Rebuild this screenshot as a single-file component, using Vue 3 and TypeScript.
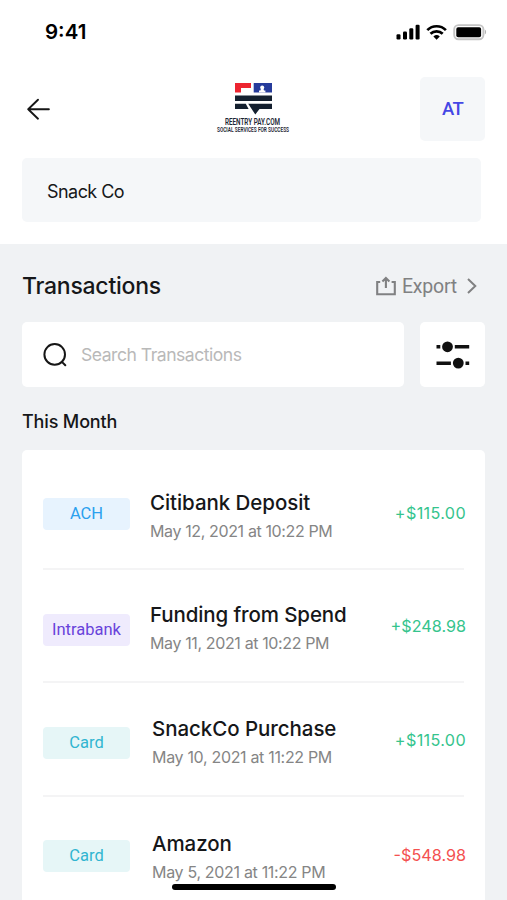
<script setup lang="ts">
interface Transaction {
  kind: string
  tone: 'ach' | 'intrabank' | 'card'
  title: string
  date: string
  amount: string
}

const transactions: Transaction[] = [
  { kind: 'ACH', tone: 'ach', title: 'Citibank Deposit', date: 'May 12, 2021 at 10:22 PM', amount: '+$115.00' },
  { kind: 'Intrabank', tone: 'intrabank', title: 'Funding from Spend', date: 'May 11, 2021 at 10:22 PM', amount: '+$248.98' },
  { kind: 'Card', tone: 'card', title: 'SnackCo Purchase', date: 'May 10, 2021 at 11:22 PM', amount: '+$115.00' },
  { kind: 'Card', tone: 'card', title: 'Amazon', date: 'May 5, 2021 at 11:22 PM', amount: '-$548.98' },
]
</script>

<template>
  <div class="screen">
    <header class="top">
      <div class="status">
        <span class="clock">9:41</span>
        <svg class="status-icons" width="92" height="20" viewBox="0 0 92 20">
          <g fill="#000">
            <rect x="1.5" y="12.3" width="4" height="5.2" rx="1.2" />
            <rect x="8" y="9.6" width="4" height="7.9" rx="1.2" />
            <rect x="14.3" y="6.3" width="4" height="11.2" rx="1.2" />
            <rect x="20.6" y="2.8" width="4" height="14.7" rx="1.2" />
            <path d="M41.6 17.7 38.4 14.4a4.8 4.8 0 0 1 6.4 0Z" />
          </g>
          <g fill="none" stroke="#000" stroke-width="2.7">
            <path d="M32.3 8.1a13.2 13.2 0 0 1 18.6 0" />
            <path d="M35.5 11.8a8.7 8.7 0 0 1 12.2 0" />
          </g>
          <rect x="59.2" y="3.1" width="29.2" height="14.2" rx="4.2" fill="#fff" stroke="#c4c4c4" stroke-width="1.9" />
          <rect x="61.3" y="5.3" width="24.8" height="9.9" rx="1.8" fill="#000" />
          <path d="M89.8 7.6a3 3 0 0 1 0 5Z" fill="#b4b4b4" />
        </svg>
      </div>
      <div class="nav">
        <svg class="back" width="24" height="24" viewBox="0 0 24 24" fill="none" stroke="#161616" stroke-width="1.9" stroke-linecap="round" stroke-linejoin="round">
          <path d="M12 2.7 2.2 12.2 12 21.7M2.2 12.2H22.9" />
        </svg>
        <div class="brand">
          <svg width="38" height="32" viewBox="0 0 38 32">
            <path d="M0 0H16V5H6V9.5H0Z" fill="#ed2530" />
            <path d="M18.7 0H37V9.5H18.7Z" fill="#263b9b" />
            <circle cx="27.2" cy="4.4" r="2" fill="#fff" />
            <path d="M26.2 5H28.2L29 7.4H30.4V9.5H24V7.4H25.4Z" fill="#fff" />
            <path d="M0 12.5H37V18H0ZM0 20.7H10.8L13.6 26H0ZM13.2 20.7H37V26H24.5L20.3 31.6Z" fill="#14202f" />
          </svg>
          <svg class="brand-text" width="78" height="20" viewBox="0 0 78 20" fill="#1d2634">
            <text x="10" y="8.7" textLength="55" lengthAdjust="spacingAndGlyphs" class="brand-name">REENTRY PAY.COM</text>
            <text x="2" y="15.6" textLength="72" lengthAdjust="spacingAndGlyphs" class="brand-tag">SOCIAL SERVICES FOR SUCCESS</text>
          </svg>
        </div>
        <div class="avatar">AT</div>
      </div>
      <div class="account">Snack Co</div>
    </header>

    <main class="content">
      <div class="heading">
        <h1>Transactions</h1>
        <div class="export">
          <svg width="20" height="20" viewBox="0 0 20 20" fill="none" stroke="#808182" stroke-width="2.1">
            <path d="M4.2 6H1.2V18.3H18.8V6H15.6M9.9 12V2.2M6.4 5.5 9.9 2 13.4 5.5" />
          </svg>
          <span>Export</span>
          <svg width="10" height="16" viewBox="0 0 10 16" fill="none" stroke="#808182" stroke-width="2">
            <path d="M1 1 8.3 8 1 15" />
          </svg>
        </div>
      </div>
      <div class="tools">
        <div class="search">
          <svg width="24" height="24" viewBox="0 0 24 24" fill="none" stroke="#161616" stroke-width="2" stroke-linecap="round">
            <circle cx="11.7" cy="11.4" r="10.3" />
            <path d="M18.9 18.9 22.3 22.3" />
          </svg>
          <span>Search Transactions</span>
        </div>
        <div class="filter">
          <svg width="34" height="28" viewBox="0 0 34 28" fill="#111">
            <path d="M.5 4.1H4.3V7.5H.5ZM18.8 4.1H33.2V7.5H18.8ZM.5 20.5H14.9V23.9H.5ZM29.5 20.5H33.2V23.9H29.5Z" />
            <circle cx="11.5" cy="5.8" r="5.4" />
            <circle cx="22.3" cy="22.1" r="5.4" />
          </svg>
        </div>
      </div>
      <h2>This Month</h2>
      <ul class="list">
        <li v-for="item in transactions" :key="item.title" class="row">
          <span class="badge" :class="item.tone">{{ item.kind }}</span>
          <div class="details">
            <div class="title">{{ item.title }}</div>
            <div class="date">{{ item.date }}</div>
          </div>
          <span class="amount" :class="{ debit: item.amount.startsWith('-') }">{{ item.amount }}</span>
        </li>
      </ul>
    </main>
    <div class="home-bar"></div>
  </div>
</template>

<style>
body {
  margin: 0;
  overflow: hidden;
}
</style>

<style scoped>
.screen {
  position: relative;
  width: 507px;
  height: 900px;
  overflow: hidden;
  background: #f0f2f4;
  color: #161719;
  font-family: Inter, "Liberation Sans", sans-serif;
}
.top {
  box-sizing: border-box;
  height: 244px;
  background: #fff;
  padding-top: 20px;
}
.status {
  display: flex;
  justify-content: space-between;
  height: 24px;
  padding: 0 20px 0 45px;
}
.clock {
  font-size: 20.5px;
  font-weight: 600;
  line-height: 24px;
  color: #000;
}
.status-icons {
  margin-top: 2px;
}
.nav {
  display: grid;
  grid-template-columns: 1fr 78px 1fr;
  height: 64px;
  margin-top: 33px;
  padding: 0 22px 0 26px;
}
.back {
  margin-top: 20px;
}
.brand {
  display: flex;
  flex-direction: column;
  align-items: center;
  padding-top: 6px;
  width: 78px;
  margin-left: -2px;
}
.brand-text {
  margin-top: 1px;
  overflow: visible;
}
.brand-name,
.brand-tag {
  font-family: Roboto, sans-serif;
  font-weight: 600;
}
.brand-name {
  font-size: 9px;
}
.brand-tag {
  font-size: 6.8px;
}
.avatar {
  justify-self: end;
  width: 65px;
  height: 64px;
  border-radius: 5px;
  background: #f5f7f9;
  color: #4547e5;
  font: 500 18.5px/65px Roboto, sans-serif;
  letter-spacing: -0.6px;
  text-align: center;
}
.account {
  width: 434px;
  height: 64px;
  margin: 17px 0 0 22px;
  padding-left: 25px;
  border-radius: 5px;
  background: #f5f7f9;
  font-size: 18px;
  line-height: 67px;
  letter-spacing: -0.55px;
}
.heading {
  display: flex;
  justify-content: space-between;
  align-items: center;
  height: 30px;
  padding: 27px 30px 0 22px;
}
h1,
h2 {
  margin: 0;
  font-weight: 500;
}
h1 {
  font-size: 23px;
  line-height: 30px;
  letter-spacing: -0.25px;
}
.export {
  display: flex;
  align-items: center;
  color: #808182;
  font: 400 19.5px/30px Roboto, sans-serif;
  letter-spacing: -0.2px;
}
.export span {
  margin: 2px 10px 0 6px;
}
.tools {
  display: flex;
  gap: 16px;
  margin: 21px 22px 0;
}
.search,
.filter {
  display: flex;
  align-items: center;
  height: 65px;
  border-radius: 5px;
  background: #fff;
}
.search {
  box-sizing: border-box;
  width: 382px;
  padding-left: 21px;
  gap: 14px;
  color: #b9b9b9;
  font-size: 17.6px;
  letter-spacing: -0.5px;
}
.filter {
  width: 65px;
  justify-content: center;
}
h2 {
  margin: 22px 0 0 22px;
  font-size: 18px;
  line-height: 25px;
  letter-spacing: -0.15px;
}
.list {
  list-style: none;
  box-sizing: border-box;
  width: 463px;
  height: 480px;
  margin: 16px 0 0 22px;
  padding: 7px 21px 0;
  border-radius: 5px;
  background: #fff;
}
.row {
  box-sizing: border-box;
  display: grid;
  grid-template-columns: 107px 1fr auto;
  height: 113px;
  border-bottom: 2px solid #f4f4f5;
}
.row:nth-child(3) {
  height: 114px;
}
.badge {
  width: 87px;
  height: 32px;
  margin-top: 41px;
  border-radius: 4px;
  font: 400 16.5px/32px Roboto, sans-serif;
  text-align: center;
}
.row:nth-child(2) .badge {
  margin-top: 44px;
}
.row:nth-child(n + 3) .badge {
  margin-top: 44px;
}
.row:nth-child(4) .badge {
  margin-top: 43px;
}
.ach {
  background: #e7f3fe;
  color: #2ba0ee;
}
.intrabank {
  background: #efebfd;
  color: #6843db;
}
.card {
  background: #e6f6f7;
  color: #31b5d1;
}
.details {
  padding-top: 33px;
}
.row:nth-child(2) .details {
  padding-top: 32px;
}
.row:nth-child(n + 3) .details {
  padding: 33px 0 0 2px;
}
.row:nth-child(4) .details {
  padding-top: 34px;
}
.title {
  font-size: 20.5px;
  font-weight: 500;
  line-height: 26px;
  letter-spacing: -0.06px;
}
.row:nth-child(2) .title {
  letter-spacing: -0.12px;
}
.date {
  margin-top: 4px;
  color: #858585;
  font-size: 16px;
  line-height: 22px;
  letter-spacing: -0.37px;
}
.row:nth-child(n + 3) .date {
  letter-spacing: -0.32px;
}
.amount {
  margin-top: 44px;
  margin-right: -2px;
  color: #35c48d;
  font-size: 16.2px;
  line-height: 24px;
}
.row:nth-child(odd) .amount {
  letter-spacing: 0.35px;
}
.row:nth-child(3) .amount {
  margin-top: 45px;
}
.row:nth-child(4) .amount {
  margin-top: 46px;
}
.debit {
  color: #f45150;
}
.home-bar {
  position: absolute;
  left: 172px;
  top: 884px;
  width: 164px;
  height: 6px;
  border-radius: 3px;
  background: #000;
}
</style>
